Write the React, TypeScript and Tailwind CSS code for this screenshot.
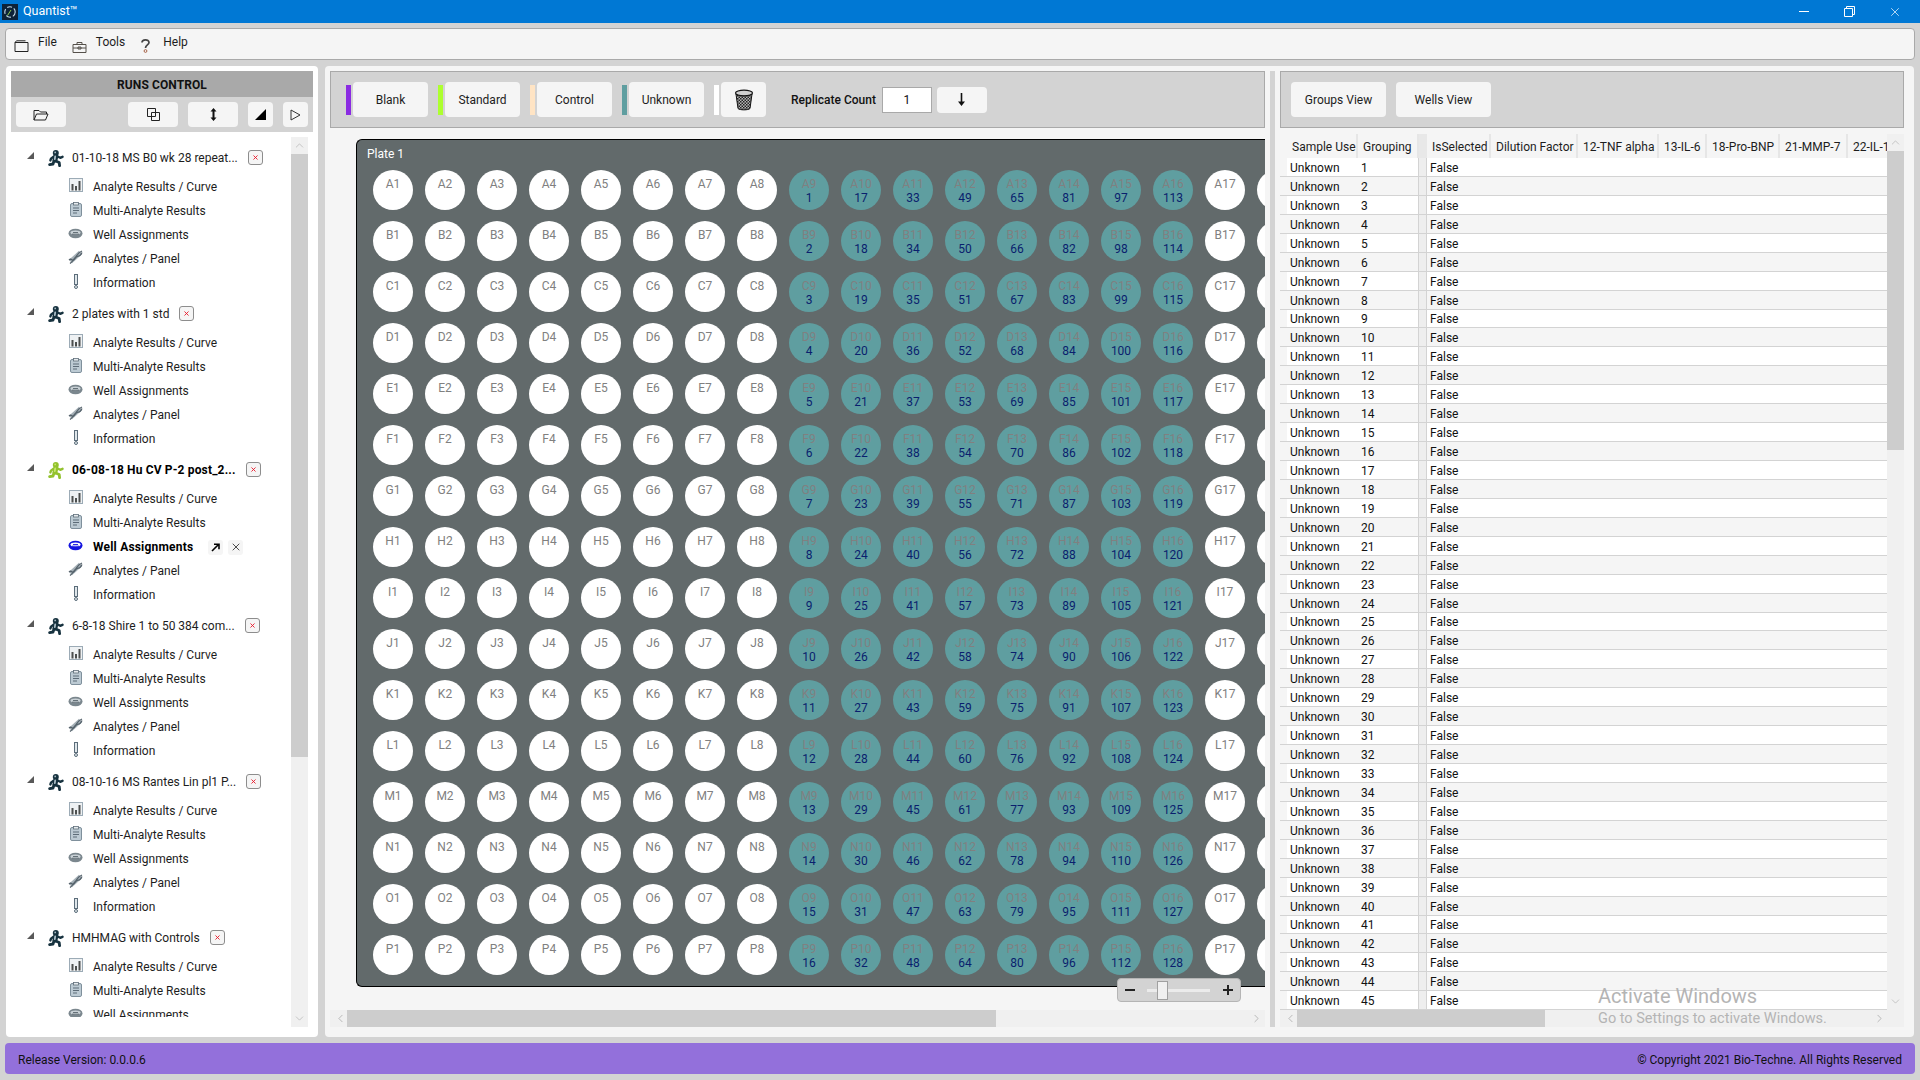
import React from "react";
import { ChevronDown, ChevronLeft, ChevronRight, ChevronUp, X } from "lucide-react";

const rowLetters = "ABCDEFGHIJKLMNOP".split("");
const columns = Array.from({ length: 18 }, (_, i) => i + 1);
const sampleRows = Array.from({ length: 45 }, (_, i) => i + 1);

const runs = [
  { name: "01-10-18 MS B0 wk 28 repeat...", active: false },
  { name: "2 plates with 1 std", active: false },
  { name: "06-08-18 Hu CV P-2 post_2...", active: true },
  { name: "6-8-18 Shire 1 to 50 384 com...", active: false },
  { name: "08-10-16 MS Rantes Lin pl1 P...", active: false },
  { name: "HMHMAG with Controls", active: false },
];

const RunIcon = ({ active }: { active: boolean }) => {
  const dark = active ? "#93c22e" : "#17323f";
  const light = active ? "#c6e56f" : "#a9bbc4";
  return (
    <svg width="16" height="17" viewBox="0 0 16 17" className="shrink-0" fill="none" strokeLinecap="round" strokeLinejoin="round">
      <circle cx="7.8" cy="3" r="3" fill={dark} />
      <path d="M7.8 6.5 7 10" stroke={dark} strokeWidth="5" />
      <path d="M9 6.2 12.2 7.8l2.3-1" stroke={dark} strokeWidth="2.4" />
      <path d="M5.6 6.6 3 8.6l-.6 1.8" stroke={dark} strokeWidth="2.4" />
      <path d="M7 10.8l4.2 1.7.4 3.2" stroke={dark} strokeWidth="2.8" />
      <path d="M6 11 5 14l-3.4.6" stroke={dark} strokeWidth="2.8" />
      <path d="M7.2 6.4 6.8 9.2" stroke={light} strokeWidth="1.8" />
      <circle cx="7.2" cy="2.4" r="0.9" fill={light} />
    </svg>
  );
};

const ChartIcon = () => (
  <svg width="14" height="14" viewBox="0 0 14 14">
    <rect x="0.5" y="0.5" width="13" height="13" fill="#eef1f3" stroke="#9cabb6" />
    <path d="M2.5 6h2v6.5h-2zM6 8h2v4.5H6zM9.5 3h2v9.5h-2z" fill="#4c4f4e" />
  </svg>
);

const ClipIcon = () => (
  <svg width="14" height="15" viewBox="0 0 14 15">
    <rect x="1.5" y="1.5" width="11" height="13" rx="1.5" fill="#bccad3" stroke="#7f909c" />
    <rect x="4.5" y="0.5" width="5" height="2.5" fill="#e6ebee" stroke="#5f6e79" strokeWidth="0.8" />
    <path d="M4 6h6M4 8.5h6M4 11h4" stroke="#5d6c78" strokeWidth="1" />
  </svg>
);

const WellIcon = ({ selected }: { selected: boolean }) => (
  <svg width="15" height="11" viewBox="0 0 15 11">
    <ellipse cx="7.5" cy="5.5" rx="7" ry="4.8" fill={selected ? "#1414e0" : "#7b878e"} />
    <ellipse cx="7.5" cy="4.6" rx="5" ry="2.2" fill={selected ? "#ffffff" : "#c9d1d6"} />
    <path d="M4 6.2h7M5 4.5h5" stroke={selected ? "#1414e0" : "#59656d"} strokeWidth="0.9" />
  </svg>
);

const DnaIcon = () => (
  <svg width="15" height="14" viewBox="0 0 15 14" fill="none">
    <path d="M2.5 11.5 12.5 2.5" stroke="#a5b0b7" strokeWidth="4.5" />
    <path d="M1 10c3-3 3 3 6-1.5S9 3 14 1" stroke="#56636c" strokeWidth="1.3" />
    <path d="M2 13.5c4-3 3-4.5 6-6.5s3.5 1 6-4.5" stroke="#56636c" strokeWidth="1.3" />
  </svg>
);

const InfoIcon = () => (
  <svg width="8" height="15" viewBox="0 0 8 15">
    <rect x="2.5" y="0.5" width="3" height="10" fill="#dfe6ea" stroke="#5c6d7a" />
    <circle cx="4" cy="13" r="1.5" fill="#dfe6ea" stroke="#5c6d7a" />
  </svg>
);

const CloseBox = () => (
  <span className="flex h-[15px] w-[15px] shrink-0 -translate-y-px items-center justify-center rounded-[3px] border border-[#8d8d8d] bg-[#f5f5f5]">
    <X size={7} strokeWidth={3} color="#e81123" />
  </span>
);

const ChildRow = ({
  icon,
  label,
  bold,
  children,
}: {
  icon: React.ReactNode;
  label: string;
  bold?: boolean;
  children?: React.ReactNode;
}) => (
  <div className="flex h-[24px] items-center">
    <span className="flex w-[15px] -translate-y-[2px] justify-center">{icon}</span>
    <span className={"ml-[10px] " + (bold ? "font-bold tracking-[0.2px] text-black" : "text-[#1d1d1d]")}>{label}</span>
    {children}
  </div>
);

const RunGroup = ({ name, active }: { name: string; active: boolean }) => (
  <div className="mb-[7px] pl-[16px]">
    <div className="mb-[5px] flex h-[24px] items-center">
      <svg width="7" height="7" viewBox="0 0 7 7" className="-translate-y-[3px] shrink-0">
        <path d="M7 0V7H0z" fill="#595959" />
      </svg>
      <span className="ml-[14px]">
        <RunIcon active={active} />
      </span>
      <span className={"ml-[8px] whitespace-nowrap " + (active ? "font-bold tracking-[0.15px] text-black" : "text-[#1d1d1d]")}>{name}</span>
      <span className="ml-[10px]">
        <CloseBox />
      </span>
    </div>
    <div className="pl-[41px]">
      <ChildRow icon={<ChartIcon />} label="Analyte Results / Curve" />
      <ChildRow icon={<ClipIcon />} label="Multi-Analyte Results" />
      <ChildRow icon={<WellIcon selected={active} />} label="Well Assignments" bold={active}>
        {active && (
          <>
            <span className="ml-[15px] flex h-[15px] w-[15px] items-center justify-center rounded-[3px] bg-[#f5f5f5]">
              <svg width="9" height="9" viewBox="0 0 9 9">
                <path d="M1 8 7 2M3 1.2h5v5" fill="none" stroke="#000" strokeWidth="1.6" />
              </svg>
            </span>
            <span className="ml-[5px] flex h-[15px] w-[15px] items-center justify-center rounded-[3px] bg-[#f5f5f5]">
              <X size={12} strokeWidth={1.6} color="#222" />
            </span>
          </>
        )}
      </ChildRow>
      <ChildRow icon={<DnaIcon />} label="Analytes / Panel" />
      <ChildRow icon={<InfoIcon />} label="Information" />
    </div>
  </div>
);

const ToolButton = ({ width, children }: { width: string; children: React.ReactNode }) => (
  <button className={"flex h-[25px] items-center justify-center rounded-[4px] bg-[#f5f5f5] " + width}>{children}</button>
);

const SampleButton = ({ bar, label }: { bar: string; label: string }) => (
  <div className="flex h-[35px] items-center">
    <span className={"h-[30px] w-[5px] " + bar} />
    <button className="ml-[2px] h-[35px] w-[75px] rounded-[4px] bg-[#f5f5f5] text-[#1d1d1d]">{label}</button>
  </div>
);

const Well = ({ row, col }: { row: number; col: number }) => {
  const unknown = col >= 9 && col <= 16;
  return (
    <div
      className={
        "flex h-[40px] w-[40px] shrink-0 flex-col items-center rounded-full pt-[7px] leading-[14px] " +
        (unknown ? "bg-[#5f9ea0]" : "bg-white")
      }
    >
      <span className="text-[#808080]">
        {rowLetters[row]}
        {col}
      </span>
      {unknown && <span className="text-[#0a1f6e]">{(col - 9) * 16 + row + 1}</span>}
    </div>
  );
};

const headers = [
  { label: "IsSelected", w: "w-[64px]" },
  { label: "Dilution Factor", w: "w-[87px]" },
  { label: "12-TNF alpha", w: "w-[81px]" },
  { label: "13-IL-6", w: "w-[48px]" },
  { label: "18-Pro-BNP", w: "w-[73px]" },
  { label: "21-MMP-7", w: "w-[68px]" },
  { label: "22-IL-1 beta", w: "w-[80px]" },
];

const HeaderCell = ({ label, w }: { label: string; w: string }) => (
  <div className={"flex h-full shrink-0 items-center whitespace-nowrap border-r-2 border-[#e6e6e6] bg-[#f5f5f5] pl-[5px] text-[#1d1d1d] " + w}>
    <span className="translate-y-px">{label}</span>
  </div>
);

export default function App() {
  return (
    <div className="relative flex h-[1080px] w-[1920px] flex-col overflow-hidden bg-[#d3d3d3] font-['Roboto',sans-serif] text-[12px]">
      {/* window title bar */}
      <div className="flex h-[23px] shrink-0 items-center bg-[#0078d4] text-white">
        <svg width="16" height="16" viewBox="0 0 16 16" className="ml-[2px]">
          <rect width="16" height="16" fill="#0d2238" />
          <circle cx="8" cy="8" r="5.2" fill="none" stroke="#c3dbea" strokeWidth="1.1" strokeDasharray="5 2" />
          <path d="M5.5 11.5 9 6" stroke="#8fd14f" strokeWidth="1" />
        </svg>
        <span className="ml-[5px] text-[12.5px]">Quantist™</span>
        <div className="ml-auto flex items-center">
          <span className="h-px w-[10px] bg-white" />
          <svg width="11" height="11" viewBox="0 0 11 11" className="ml-[35px]">
            <path d="M.5 2.5h8v8h-8zM2.5 2.5v-2h8v8h-2" fill="none" stroke="#fff" />
          </svg>
          <X size={14} strokeWidth={1.2} color="#fff" className="ml-[33px] mr-[18px]" />
        </div>
      </div>

      {/* menu */}
      <div className="mx-[5px] mt-[5px] flex h-[32px] shrink-0 items-start rounded-[4px] border border-[#a9a9a9] bg-[#f5f5f5] pl-[8px] text-[#1d1d1d]">
        <svg width="15" height="12" viewBox="0 0 15 12" className="mt-[11px]">
          <path d="M1 2.5h13v9H1zM1 2.5 2.5.8h9" fill="none" stroke="#222" />
        </svg>
        <span className="ml-[9px] mt-[4px]">File</span>
        <svg width="15" height="12" viewBox="0 0 15 12" className="ml-[15px] mt-[12px]">
          <path d="M1 3.5h13v8H1zM5 3.5V1.5h5v2M1 7h13M6 6h3v2H6z" fill="none" stroke="#55504a" />
        </svg>
        <span className="ml-[9px] mt-[4px]">Tools</span>
        <svg width="11" height="15" viewBox="0 0 11 15" className="ml-[15px] mt-[9px]">
          <path d="M2 4.5C2 1 9 .8 9 4.5 9 7 5.5 6.8 5.5 10" fill="none" stroke="#444" strokeWidth="1.7" />
          <circle cx="5.5" cy="13" r="1.4" fill="none" stroke="#a8654a" />
        </svg>
        <span className="ml-[12px] mt-[4px]">Help</span>
      </div>

      <div className="mx-[5px] mt-[6px] flex h-[971px] shrink-0">
        {/* runs control */}
        <div className="ml-px flex h-full w-[312px] shrink-0 flex-col rounded-[4px] bg-white p-[5px]">
          <div className="flex h-[26px] shrink-0 items-center justify-center bg-[#a9a9a9] pt-[2px] font-bold tracking-[0.1px] text-[#111]">RUNS CONTROL</div>
          <div className="flex h-[35px] shrink-0 items-center bg-[#d3d3d3] pl-[5px]">
            <ToolButton width="w-[50px]">
              <svg width="16" height="12" viewBox="0 0 16 12">
                <path d="M1 11V1.5h5l1.5 1.5h6V5M1 11h11.5L15 5H3.5z" fill="none" stroke="#222" />
              </svg>
            </ToolButton>
            <div className="w-[62px]" />
            <ToolButton width="w-[50px]">
              <svg width="13" height="13" viewBox="0 0 13 13">
                <path d="M.5.5h8v8h-8zM4.5 4.5h8v8h-8z" fill="none" stroke="#222" />
              </svg>
            </ToolButton>
            <div className="w-[10px]" />
            <ToolButton width="w-[50px]">
              <svg width="7" height="13" viewBox="0 0 7 13">
                <path d="M3.5 0 6.5 3.5H4.5v6h2L3.5 13 .5 9.5h2v-6h-2z" fill="#111" />
              </svg>
            </ToolButton>
            <div className="w-[10px]" />
            <ToolButton width="w-[25px]">
              <svg width="11" height="11" viewBox="0 0 11 11">
                <path d="M11 0v11H0z" fill="#000" />
              </svg>
            </ToolButton>
            <div className="w-[10px]" />
            <ToolButton width="w-[25px]">
              <svg width="11" height="12" viewBox="0 0 11 12">
                <path d="M1 1l9 5-9 5z" fill="none" stroke="#333" />
              </svg>
            </ToolButton>
          </div>
          <div className="mt-[5px] flex h-[890px]">
            <div className="h-[880px] w-[280px] shrink-0 overflow-hidden pt-[9px]">
              {runs.map((run) => (
                <RunGroup key={run.name} name={run.name} active={run.active} />
              ))}
            </div>
            <div className="flex h-full w-[17px] shrink-0 flex-col bg-[#f0f0f0]">
              <span className="flex h-[17px] items-center justify-center">
                <ChevronUp size={13} strokeWidth={1} color="#a0a0a0" />
              </span>
              <div className="h-[603px] bg-[#cdcdcd]" />
              <span className="mt-auto flex h-[17px] items-center justify-center">
                <ChevronDown size={13} strokeWidth={1} color="#a0a0a0" />
              </span>
            </div>
          </div>
        </div>

        {/* well assignment workspace */}
        <div className="ml-[7px] flex h-full w-[1589px] shrink-0 rounded-[4px] bg-[#f5f5f5] p-[5px] pb-[10px]">
          <div className="relative flex w-[935px] shrink-0 flex-col">
            <div className="flex h-[57px] shrink-0 items-center gap-[10px] border border-[#a9a9a9] bg-[#d3d3d3] pl-[15px]">
              <SampleButton bar="bg-[#8a2be2]" label="Blank" />
              <SampleButton bar="bg-[#adff2f]" label="Standard" />
              <SampleButton bar="bg-[#ffe4c4]" label="Control" />
              <SampleButton bar="bg-[#5f9ea0]" label="Unknown" />
              <div className="flex h-[35px] items-center">
                <span className="h-[30px] w-[5px] bg-white" />
                <button className="ml-[2px] flex h-[35px] w-[45px] items-center justify-center rounded-[4px] bg-[#f5f5f5]">
                  <svg width="20" height="22" viewBox="0 0 20 22">
                    <defs>
                      <pattern id="mesh" width="3" height="3" patternUnits="userSpaceOnUse">
                        <rect width="3" height="3" fill="#b5b5b5" />
                        <rect width="1.5" height="1.5" fill="#222" />
                        <rect x="1.5" y="1.5" width="1.5" height="1.5" fill="#222" />
                      </pattern>
                    </defs>
                    <path d="M2 5l2 14.5c1.5 1.8 10.5 1.8 12 0L18 5z" fill="url(#mesh)" stroke="#111" />
                    <ellipse cx="10" cy="4" rx="8.5" ry="2.8" fill="#cfcfcf" stroke="#111" strokeWidth="1.2" />
                  </svg>
                </button>
              </div>
              <span className="ml-[15px] font-medium text-[#111]">Replicate Count</span>
              <div className="-ml-[4px] flex h-[26px] w-[50px] items-center justify-center border border-[#a9a9a9] bg-white text-[#111]">1</div>
              <button className="-ml-[5px] flex h-[26px] w-[50px] items-center justify-center rounded-[4px] bg-[#f5f5f5]">
                <svg width="7" height="13" viewBox="0 0 7 13">
                  <path d="M2.7 0h1.6v8.5h2.7L3.5 13 0 8.5h2.7z" fill="#111" />
                </svg>
              </button>
            </div>

            <div className="ml-[26px] mt-[11px] h-[848px] shrink-0 overflow-hidden rounded-l-[6px] border-y border-l border-black bg-[#626a6b] pl-[16px]">
              <div className="-ml-[6px] h-[30px] pt-[7px] leading-[14px] text-white">Plate 1</div>
              <div className="flex flex-col gap-[11px]">
                {rowLetters.map((_, row) => (
                  <div key={row} className="flex gap-[12px]">
                    {columns.map((col) => (
                      <Well key={col} row={row} col={col} />
                    ))}
                  </div>
                ))}
              </div>
            </div>

            {/* zoom slider over the plate */}
            <div className="absolute left-[787px] top-[907px] flex h-[24px] w-[124px] items-center rounded-[4px] border border-[#b5b5b5] bg-[#d3d3d3]">
              <span className="ml-[7px] h-[2px] w-[10px] bg-[#222]" />
              <div className="relative ml-[12px] h-[3px] w-[63px] bg-[#ebebeb]">
                <span className="absolute left-[10px] -top-[8px] h-[19px] w-[11px] border border-[#a0a0a0] bg-[#f0f0f0]" />
              </div>
              <span className="relative ml-[13px] h-[2px] w-[10px] bg-[#222]">
                <span className="absolute left-[4px] -top-[4px] h-[10px] w-[2px] bg-[#222]" />
              </span>
            </div>

            <div className="mt-[23px] flex h-[17px] shrink-0 items-center bg-[#f0f0f0] pl-[7px]">
              <ChevronLeft size={13} strokeWidth={1} color="#8a8a8a" className="-ml-[3px]" />
              <div className="h-full w-[649px] bg-[#cdcdcd]" />
              <ChevronRight size={13} strokeWidth={1} color="#8a8a8a" className="ml-auto mr-[2px]" />
            </div>
          </div>

          {/* splitter */}
          <div className="ml-[5px] w-[5px] shrink-0 bg-[#d3d3d3]" />

          {/* samples grid */}
          <div className="ml-[5px] flex w-[624px] shrink-0 flex-col">
            <div className="flex h-[57px] shrink-0 items-center gap-[10px] border border-[#a9a9a9] bg-[#d3d3d3] pl-[10px]">
              <button className="h-[35px] w-[95px] rounded-[4px] bg-[#f5f5f5] text-[#1d1d1d]">Groups View</button>
              <button className="h-[35px] w-[95px] rounded-[4px] bg-[#f5f5f5] text-[#1d1d1d]">Wells View</button>
            </div>
            <div className="mt-[6px] flex h-[876px] shrink-0">
              <div className="w-[607px] shrink-0 overflow-hidden">
                <div className="flex h-[24px] whitespace-nowrap">
                  <div className="h-full w-[7px] shrink-0 bg-[#f5f5f5]" />
                  <HeaderCell label="Sample Use" w="w-[71px]" />
                  <HeaderCell label="Grouping" w="w-[61px]" />
                  <div className="h-full w-[8px] shrink-0 bg-[#e8e8e8]" />
                  {headers.map((h) => (
                    <HeaderCell key={h.label} label={h.label} w={h.w} />
                  ))}
                </div>
                {sampleRows.map((n) => (
                  <div key={n} className={"flex h-[18.95px] items-center border-b border-[#d3d3d3] text-[#111] " + (n % 2 ? "bg-white" : "bg-[#f5f5f5]")}>
                    <div className="h-full w-[7px] shrink-0 bg-[#f5f5f5]" />
                    <div className="w-[71px] shrink-0 translate-y-px pl-[3px]">Unknown</div>
                    <div className="flex h-full w-[61px] shrink-0 items-center border-r border-[#d3d3d3] pl-[3px]">
                      <span className="translate-y-px">{n}</span>
                    </div>
                    <div className="h-full w-[8px] shrink-0 border-r border-[#d3d3d3] bg-[#eeeeee]" />
                    <div className="translate-y-px pl-[3px]">False</div>
                  </div>
                ))}
              </div>
              <div className="flex h-full w-[17px] shrink-0 flex-col bg-[#f0f0f0]">
                <span className="flex h-[17px] items-center justify-center">
                  <ChevronUp size={13} strokeWidth={1} color="#a0a0a0" />
                </span>
                <div className="h-[299px] bg-[#cdcdcd]" />
                <span className="mt-auto flex h-[17px] items-center justify-center">
                  <ChevronDown size={13} strokeWidth={1} color="#a0a0a0" />
                </span>
              </div>
            </div>
            <div className="flex h-[17px] shrink-0 items-center bg-[#f0f0f0] pl-[4px]">
              <ChevronLeft size={13} strokeWidth={1} color="#8a8a8a" />
              <div className="h-full w-[248px] bg-[#cdcdcd]" />
              <ChevronRight size={13} strokeWidth={1} color="#8a8a8a" className="ml-auto mr-[18px]" />
            </div>
          </div>
        </div>
      </div>

      {/* status bar */}
      <div className="mx-[5px] mt-[6px] flex h-[31px] shrink-0 items-center justify-between rounded-[4px] bg-[#9370db] px-[13px] pt-[2px] text-[#111]">
        <span>Release Version: 0.0.0.6</span>
        <span>© Copyright 2021 Bio-Techne. All Rights Reserved</span>
      </div>

      {/* windows activation watermark */}
      <div className="absolute left-[1598px] top-[983px] text-[#b4b4b4]">
        <div className="text-[20px] leading-[26px]">Activate Windows</div>
        <div className="text-[14.5px] leading-[20px]">Go to Settings to activate Windows.</div>
      </div>
    </div>
  );
}
